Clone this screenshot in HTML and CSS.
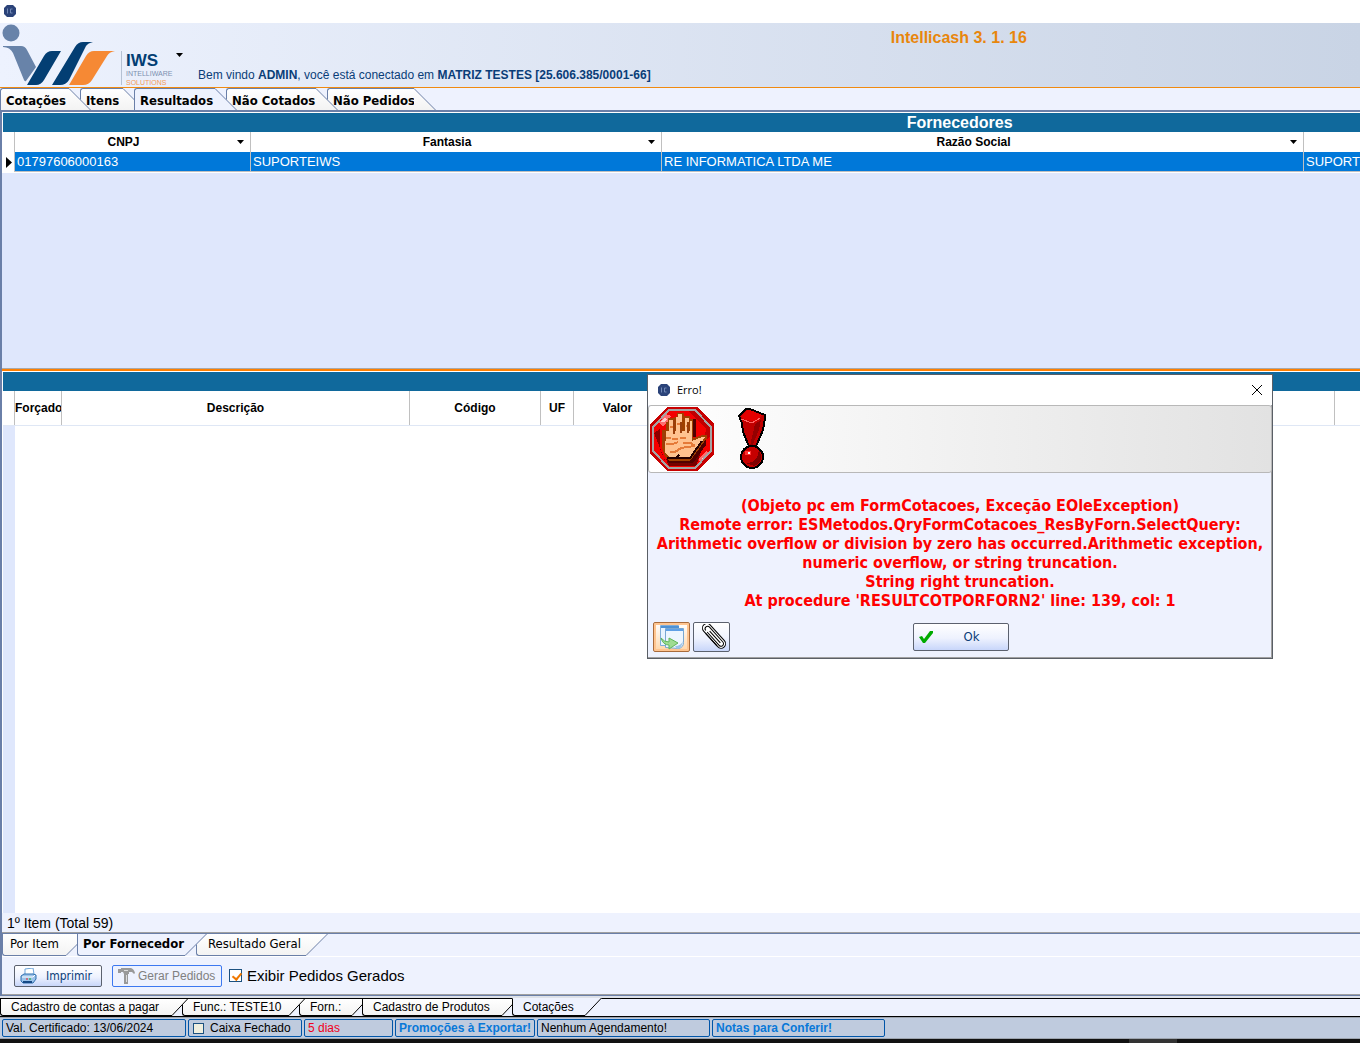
FILE: index.html
```html
<!DOCTYPE html>
<html lang="pt-BR">
<head>
<meta charset="utf-8">
<title>Intellicash</title>
<link rel="stylesheet" href="styles.css">
</head>
<body>
<svg width="0" height="0" class="defs" aria-hidden="true">
  <defs>
    <linearGradient id="tabFill" x1="0" y1="0" x2="0" y2="1"><stop offset="0" stop-color="#fff"/><stop offset="1" stop-color="#f3f3f3"/></linearGradient>
    <symbol id="appIcon" viewBox="0 0 12 12"><path d="M3 0h6l3 3v6l-3 3H3L0 9V3z" fill="#2b4379"/><path d="M3.500 3.500v5M8.500 4h-2v4h2" fill="none" stroke="#7188b5"/></symbol>
    <symbol id="slantDown" viewBox="0 0 22 22"><path d="M0 0l22 22H0z" fill="url(#tabFill)"/><path d="M0 .5L21.500 22" fill="none" stroke="#6a7fa8"/></symbol>
    <symbol id="slantDownActive" viewBox="0 0 22 22"><path d="M0 0l22 22H0z" fill="#eef2fe"/><path d="M0 .5L21.500 22" fill="none" stroke="#6a7fa8"/></symbol>
    <symbol id="slantUp" viewBox="0 0 22 22"><path d="M22 0L0 22V0z" fill="url(#tabFill)"/><path d="M0 21.500L21.500 0" fill="none" stroke="#6a7fa8"/></symbol>
    <symbol id="slantUpActive" viewBox="0 0 22 22"><path d="M22 0L0 22V0z" fill="#eef2fe"/><path d="M0 21.500L21.500 0" fill="none" stroke="#6a7fa8"/></symbol>
    <symbol id="appSlant" viewBox="0 0 17 18"><path d="M17 0L0 18V0z" fill="url(#tabFill)"/><path d="M0 17.500L16.500 0M0 .5h17" fill="none" stroke="#000"/></symbol>
    <symbol id="appSlantActive" viewBox="0 0 17 18"><path d="M17 0L0 18V0z" fill="#eef2fe"/><path d="M0 17.500L16.500 0" fill="none" stroke="#000"/></symbol>
    <symbol id="arrow" viewBox="0 0 7 4"><path d="M0 0h7L3.500 4z"/></symbol>
  </defs>
</svg>

<div class="titlebar"><svg class="icon12"><use href="#appIcon"/></svg></div>

<header class="banner">
  <svg class="logo" viewBox="0 0 170 64" role="img" aria-label="IWS Intelliware Solutions">
    <circle cx="11" cy="10" r="8.500" fill="#6883a9"/>
    <path d="M3 23h18q4 0 6 4l9 17-10 14q-1 1-2-1L13 30q-3-6-10-6z" fill="#6883a9"/>
    <path d="M61 28L44 57q-3 5-8 5h-9l17-29q3-5 8-5zM93 19q-5 1-7 4L69 57q-3 5-9 5h-8l23-38q3-5 8-5h10z" fill="#033e73"/>
    <path d="M115 28q-6 1-8 5L92 57q-3 5-9 5H69l17-29q3-5 8-5z" fill="#f68934"/>
    <path d="M121.500 28v34" stroke="#b5c1d3"/>
    <text x="126" y="43" class="logo-name">IWS</text>
    <text x="126" y="53" class="logo-sub">INTELLIWARE</text>
    <text x="126" y="62" class="logo-sub logo-orange">SOLUTIONS</text>
  </svg>
  <button class="logo-menu" aria-label="Menu"><svg class="arrow"><use href="#arrow"/></svg></button>
  <p class="welcome">Bem vindo <b>ADMIN</b>, você está conectado em <b>MATRIZ TESTES [25.606.385/0001-66]</b></p>
  <p class="product">Intellicash 3. 1. 16</p>
</header>

<nav class="tabs top-tabs">
  <div class="tab"><button class="w69">Cotações</button><svg><use href="#slantDown"/></svg></div>
  <div class="tab"><button class="w43">Itens</button><svg><use href="#slantDown"/></svg></div>
  <div class="tab active"><button class="w81">Resultados</button><svg><use href="#slantDownActive"/></svg></div>
  <div class="tab"><button class="w90">Não Cotados</button><svg><use href="#slantDown"/></svg></div>
  <div class="tab"><button class="w87">Não Pedidos</button><svg><use href="#slantDown"/></svg></div>
</nav>

<main class="workspace">
  <section class="suppliers">
    <h2 class="band">Fornecedores</h2>
    <table class="grid suppliers-grid">
      <colgroup><col class="c-mark"><col class="c-cnpj"><col class="c-fant"><col class="c-razao"><col></colgroup>
      <thead><tr>
        <th></th>
        <th><span class="head">CNPJ<svg class="arrow"><use href="#arrow"/></svg></span></th>
        <th><span class="head">Fantasia<svg class="arrow"><use href="#arrow"/></svg></span></th>
        <th><span class="head">Razão Social<svg class="arrow"><use href="#arrow"/></svg></span></th>
        <th></th>
      </tr></thead>
      <tbody><tr>
        <td class="marker"><svg viewBox="0 0 6 11"><path d="M0 0l6 5.500L0 11z"/></svg></td>
        <td>01797606000163</td><td>SUPORTEIWS</td><td>RE INFORMATICA LTDA ME</td><td>SUPORTEIWS</td>
      </tr></tbody>
    </table>
  </section>

  <section class="items">
    <div class="band"></div>
    <table class="grid items-grid">
      <colgroup><col class="c-mark"><col class="c-forc"><col class="c-desc"><col class="c-cod"><col class="c-uf"><col class="c-valor"><col><col class="c-end"></colgroup>
      <thead><tr><th></th><th>Forçado</th><th>Descrição</th><th>Código</th><th>UF</th><th>Valor</th><th></th><th></th></tr></thead>
    </table>
    <div class="items-body"></div>
  </section>

  <p class="count">1º Item (Total 59)</p>

  <nav class="tabs view-tabs">
    <div class="tab"><button class="w64">Por Item</button><svg><use href="#slantUp"/></svg></div>
    <div class="tab active"><button class="w108">Por Fornecedor</button><svg><use href="#slantUpActive"/></svg></div>
    <div class="tab"><button class="w110">Resultado Geral</button><svg><use href="#slantUp"/></svg></div>
  </nav>

  <div class="toolbar">
    <button class="btn print">
      <svg viewBox="0 0 17 16"><path d="M5 1l8-1 1 6-9 2z" fill="#fff" stroke="#6ba3d8"/><path d="M1 8l3-2h9l3 1v4l-3 4H3l-2-2z" fill="#9cc3ea" stroke="#2f6fae"/><path d="M2 9h11l2-2" fill="none" stroke="#fff"/><path d="M3 14h9" stroke="#174a86" stroke-width="2"/><path d="M6 11h2" stroke="#e22"/><path d="M9 11h2" stroke="#1a2"/></svg>
      Imprimir
    </button>
    <button class="btn orders" disabled>
      <svg viewBox="0 0 17 17"><path d="M0 2h3V1h10q3 1 4 5l-1 1-2-2h-3v2h-1v10H6V7L5 5H3v1H0z" fill="#999"/><path d="M6 3.500h4M8.500 8v7" stroke="#ddd"/></svg>
      Gerar Pedidos
    </button>
    <label class="check"><input type="checkbox" checked>Exibir Pedidos Gerados</label>
  </div>
</main>

<nav class="tabs app-tabs">
  <div class="tab"><button class="w172">Cadastro de contas a pagar</button><svg><use href="#appSlant"/></svg></div>
  <div class="tab"><button class="w107">Func.: TESTE10</button><svg><use href="#appSlant"/></svg></div>
  <div class="tab"><button class="w53">Forn.:</button><svg><use href="#appSlant"/></svg></div>
  <div class="tab"><button class="w140">Cadastro de Produtos</button><svg><use href="#appSlant"/></svg></div>
  <div class="tab active"><button class="w73">Cotações</button><svg><use href="#appSlantActive"/></svg></div>
</nav>

<footer class="status">
  <span class="cell s184">Val. Certificado: 13/06/2024</span>
  <label class="cell s114"><input type="checkbox">Caixa Fechado</label>
  <span class="cell s89 red">5 dias</span>
  <b class="cell s140 blue">Promoções à Exportar!</b>
  <span class="cell s173">Nenhum Agendamento!</span>
  <b class="cell s173 blue">Notas para Conferir!</b>
</footer>
<div class="taskbar"><span></span></div>

<div class="dialog" role="alertdialog" aria-labelledby="dlg-title">
  <div class="dialog-title">
    <svg class="icon12"><use href="#appIcon"/></svg><span id="dlg-title">Erro!</span>
    <button aria-label="Fechar"><svg viewBox="0 0 10 10"><path d="M0 0l10 10M10 0L0 10" stroke="#000" fill="none"/></svg></button>
  </div>
  <div class="dialog-banner">
    <svg width="64" height="64" viewBox="0 0 64 64" shape-rendering="crispEdges">
      <path d="M17 0h30l17 17v30L47 64H17L0 47V17z" fill="#c80000"/>
      <path d="M19 4h26l15 16v24L45 60H19L4 44V20z" fill="#f40000"/>
      <path d="M38 4h7l15 16v10l-6 4 2-12z" fill="#c00000"/>
      <path d="M4 26l6-4v20l6 14z" fill="#8c0000"/>
      <path d="M16 52h29l6-7-5 14H19z" fill="#760000"/>
      <path d="M9 16L16 7l5 2-3 6-5 4zM49 51l8-7 2 3-9 10z" fill="#ff6e6e"/>
      <path d="M11 15l3-4 3 1-2 3zM52 51l3-3 1 2-3 3z" fill="#ffd0d0"/>
      <path d="M19 3h26l16 17v24L45 61H19L3 44V20z" fill="none" stroke="#a5a5a5" stroke-width="2"/>
      <path d="M43 12h3v18h-3zM17 52h24l15-20v6L43 56H19z" fill="#500000"/>
      <path d="M12 23h4v-8h2v-4h6v-1h3V6h7v3h6v3h3v19l6-2 4-1h4v3L46 46l-6 8H19l-4-5-3-8z" fill="#a04000"/>
      <path d="M16 24h3v-11h4v11h3V10h2V7h4v17h3V11h4v13h1V14h2v20l10-4h3l-6 9-9 12H20l-5-6z" fill="#ffc28f"/>
      <path d="M16 31h5M22 32h6M30 31h6M20 20h3M27 17h4M36 19h3M16 37h7l5-2M33 36h8l4 3M20 45h5l6-4 13-2" fill="none" stroke="#e57a38" stroke-width="2"/>
      <path d="M24 13v14M31 15v11M38 15v11M14 26v13" fill="none" stroke="#9a3e0c" stroke-width="2"/>
      <path d="M17 51h23l12-17M26 51l3-3" fill="none" stroke="#250000" stroke-width="2"/>
    </svg>
    <svg width="30" height="64" viewBox="0 0 30 64" shape-rendering="crispEdges">
      <path d="M2 9l7-7h4l15 6v3l-2 12-6 14-2 4h-5l-2-4-5-12-1-9z" fill="#c00000" stroke="#000" stroke-width="2"/>
      <path d="M4 9l6-6h3l12 5-6 7-13-3z" fill="#e40000"/><path d="M4 12l11 4 8-5" fill="none" stroke="#ff6262"/>
      <path d="M18 17l6-4-2 10-7 16h-2z" fill="#940000"/>
      <circle cx="15" cy="50" r="11" fill="#c60000" stroke="#000" stroke-width="2"/><path d="M22 43q6 12-5 16l-9-3q12 1 14-13" fill="#800000"/><path d="M8 44h6v4H8z" fill="#f33"/><path d="M11 45h2v2h-2z" fill="#fff"/>
    </svg>
  </div>
  <p class="message">(Objeto pc em FormCotacoes, Exceção EOleException)<br>Remote error: ESMetodos.QryFormCotacoes_ResByForn.SelectQuery:<br>Arithmetic overflow or division by zero has occurred.Arithmetic exception,<br>numeric overflow, or string truncation.<br>String right truncation.<br>At procedure 'RESULTCOTPORFORN2' line: 139, col: 1</p>
  <div class="dialog-actions">
    <button class="btn tool hot" aria-label="Enviar"><svg viewBox="0 0 26 26"><path d="M1.500 1.500h18v20h-18z" fill="#e9f4ff" stroke="#80add8"/><path d="M2 3h18" stroke="#4e91d4" stroke-width="2"/><path d="M6.500 4.500h18v14q0 5-5 6l-13-1z" fill="#edf6ff" stroke="#79a7d2"/><path d="M7 6h17" stroke="#5fa0e6" stroke-width="2"/><path d="M24 17q-1 7-6 8l-2-3q6 0 8-5" fill="#9cc3e8"/><path d="M2 14q3 4 8 4v-4l9 5-9 6v-4q-6 0-8-7z" fill="#9fdc92" stroke="#5fb65a"/></svg></button>
    <button class="btn tool clip" aria-label="Anexo"><svg viewBox="0 0 26 26"><g transform="rotate(-42 13 13)" fill="none" stroke="#000"><path d="M8.500 21V1a4.500 4.500 0 0 1 9 0v21a4.500 4.500 0 0 1-9 0z" fill="#fff"/><path d="M10.500 4v18a2.500 2.500 0 0 0 5 0V2a2.500 2.500 0 0 0-5 0M13 5v16M8.500 4v17"/></g></svg></button>
    <button class="btn ok"><svg viewBox="0 0 14 12"><path d="M0 6l3-1 2 3 6-8h3v2L6 12H4z" fill="#0a0"/></svg><span>Ok</span></button>
  </div>
</div>
</body>
</html>
```
FILE: styles.css
```css
* { box-sizing: border-box; }
body {
  margin: 0;
  min-height: 100vh;
  display: flex;
  flex-direction: column;
  position: relative;
  overflow: hidden;
  background: #eef2fe;
  color: #000;
  font: 12px/16px "Liberation Sans", Arial, sans-serif;
}
p, h2 { margin: 0; }
button { font: inherit; color: inherit; padding: 0; border: 0; background: none; }
svg { display: block; flex: none; }
.defs { position: absolute; }
.icon12 { width: 12px; height: 12px; }
.arrow { width: 7px; height: 4px; }

.titlebar { height: 23px; padding: 5px 4px; background: #fff; }

.banner {
  display: flex;
  height: 65px;
  border-bottom: 1px solid #f08a10;
  background: linear-gradient(90deg, #edf2fe, #c9d4e5);
  position: relative;
}
.logo { width: 170px; height: 64px; overflow: visible; }
.logo-name { font: bold 17px "Liberation Sans", Arial, sans-serif; fill: #033e73; }
.logo-sub { font: 7px "Liberation Sans", Arial, sans-serif; fill: #7c90b0; }
.logo-orange { fill: #f39a58; }
.logo-menu { align-self: flex-start; padding: 30px 6px; }
.welcome { align-self: flex-end; padding: 0 0 4px 9px; color: #0a3d78; white-space: nowrap; }
.product {
  position: absolute;
  top: 7px;
  left: 41%;
  right: 0;
  text-align: center;
  font-weight: bold;
  font-size: 16px;
  color: #e8860c;
}

.tabs { display: flex; white-space: nowrap; }
.tab { display: flex; position: relative; }
.tab button { text-align: left; background: linear-gradient(#fff, #f3f3f3); }
.tab.active button { background: #eef2fe; }
.tab svg { width: 22px; height: 22px; margin-right: -11px; }
.tab:nth-child(1) { z-index: 4; }
.tab:nth-child(2) { z-index: 3; }
.tab:nth-child(4) { z-index: 2; }
.tab:nth-child(5) { z-index: 1; }
.tab.active { z-index: 5; }

.top-tabs { height: 24px; border-bottom: 2px solid #6a7fa8; font: bold 13px/16px "DejaVu Sans Condensed", "DejaVu Sans", sans-serif; }
.top-tabs button { height: 22px; padding: 2px 0 0 5px; border: solid #6a7fa8; border-width: 1px 0 0 1px; border-top-left-radius: 3px; }
.w43 { width: 43px; }
.w53 { width: 53px; }
.w64 { width: 64px; }
.w69 { width: 69px; }
.w73 { width: 73px; }
.w81 { width: 81px; }
.w87 { width: 87px; }
.w90 { width: 90px; }
.w107 { width: 107px; }
.w108 { width: 108px; }
.w110 { width: 110px; }
.w140 { width: 140px; }
.w172 { width: 172px; }

.workspace {
  flex: 1;
  display: flex;
  flex-direction: column;
  border-left: 2px solid #6a7fa8;
  border-bottom: 1px solid #6a7fa8;
}
.band {
  height: 19px;
  padding-left: 41%;
  background: #10699c;
  color: #fff;
  font-size: 16px;
  line-height: 19px;
  text-align: center;
}
.suppliers { height: 259px; padding: 1px 0 0 1px; background: linear-gradient(#fff 0 61px, #dfe7fc 61px); border-bottom: 2px solid #ff7f00; box-shadow: inset 0 -1px #a9a9a9; }
.grid { width: 100%; table-layout: fixed; border-spacing: 0; white-space: nowrap; }
.grid th, .grid td { padding: 0; border-right: 1px solid #c0c0c0; overflow: hidden; }
.grid th { background: #fff; }
.grid th:last-child, .grid td:last-child { border-right: 0; }
.c-mark { width: 12px; }
.c-cnpj { width: 236px; }
.c-fant { width: 411px; }
.c-razao { width: 642px; }
.c-forc { width: 47px; }
.c-desc { width: 348px; }
.c-cod { width: 131px; }
.c-uf { width: 33px; }
.c-valor { width: 88px; }
.c-end { width: 25px; }
.suppliers-grid th { height: 20px; }
.suppliers-grid td { height: 20px; padding-left: 2px; background: #0078d9; color: #fff; font-size: 13px; line-height: 19px; border-bottom: 1px solid #c0c0c0; }
.suppliers-grid .marker { background: #fff; padding-left: 3px; border-bottom: 0; }
.marker svg { width: 6px; height: 11px; }
.head { display: flex; align-items: center; justify-content: center; position: relative; padding-right: 18px; }
.head .arrow { position: absolute; right: 6px; }

.items { flex: 1; display: flex; flex-direction: column; padding: 1px 0 0 1px; background: #fff; }
.items-grid th { height: 34px; }
.items-body { flex: 1; border-top: 1px solid #dfe7f5; background: linear-gradient(90deg, #dfe7fc 12px, #fff 12px); }

.count { height: 20px; padding-left: 5px; border-bottom: 1px solid #a0a0a0; font-size: 14px; line-height: 20px; }

.view-tabs { height: 24px; border-top: 1px solid #6a7fa8; border-bottom: 1px solid #fff; font: 13px/16px "DejaVu Sans Condensed", "DejaVu Sans", sans-serif; }
.view-tabs button { height: 22px; padding: 0 0 1px 7px; border: solid #6a7fa8; border-width: 0 0 1px 1px; border-bottom-left-radius: 3px; }
.view-tabs .active button { padding-left: 5px; font-weight: bold; }
.view-tabs .tab:nth-child(3) button { padding-left: 11px; }

.toolbar { display: flex; align-items: center; height: 38px; padding-left: 12px; border-bottom: 1px solid #a0a0a0; }
.btn { display: flex; align-items: center; border: 1px solid #5b616e; border-radius: 2px; background: linear-gradient(#fff, #eef2fe 55%, #c8d6fa); color: #0a3d78; }
.print { width: 88px; height: 22px; padding-left: 5px; gap: 9px; font: 12px/16px "DejaVu Sans Condensed", "DejaVu Sans", sans-serif; }
.print svg { width: 17px; height: 16px; }
.orders { width: 110px; height: 22px; margin-left: 10px; padding-left: 5px; gap: 3px; border-color: #3c78f0; background: #eef2fe; color: #808080; }
.orders svg { width: 17px; height: 17px; }
.check { display: flex; align-items: center; margin-left: 7px; gap: 5px; font-size: 15px; }
.check input, .status input { appearance: none; width: 13px; height: 13px; margin: 0; border: 1px solid #1c5180; background: #fff; }
.check input { position: relative; }
.check input:checked::after { content: ""; position: absolute; left: 4px; top: 1px; width: 4px; height: 7px; border: solid #f07800; border-width: 0 2px 2px 0; transform: rotate(40deg); }

.app-tabs { height: 21px; padding-top: 2px; background: linear-gradient(#dde1e8 0 2px, #000 2px 3px, #eef2fe 3px); border-bottom: 1px solid #000; }
.app-tabs button { height: 18px; padding: 0 0 0 10px; border: 1px solid #000; border-right: 0; border-bottom-left-radius: 3px; }
.app-tabs .active button { border-top-color: #eef2fe; }
.app-tabs svg { width: 17px; height: 18px; margin-right: -7px; }

.status { display: flex; gap: 2px; height: 22px; padding: 1px 2px; border: solid #9da4ae; border-width: 1px 0; background: #bfcbde; white-space: nowrap; }
.cell { display: flex; align-items: center; height: 18px; padding-left: 3px; border: 1px solid #0055a8; border-radius: 2px; }
.status input { width: 11px; height: 11px; margin: 0 6px 0 1px; background: #f0efdf; }
.s184 { width: 184px; }
.s114 { width: 114px; }
.s89 { width: 89px; }
.s140 { width: 140px; }
.s173 { width: 173px; }
.red { color: #f00020; }
.blue { color: #0878d8; }
.taskbar { height: 4px; background: #111; padding-left: 83%; }
.taskbar span { display: block; width: 48px; height: 4px; background: #333; }

.dialog {
  position: absolute;
  z-index: 10;
  top: 374px;
  right: 87px;
  width: 626px;
  border: 1px solid #5a5f66;
  box-shadow: inset -1px -1px #a0a0a0;
  background: #eef2fe;
}
.dialog-title { display: flex; align-items: center; height: 30px; padding: 0 10px; gap: 7px; background: #fff; font: 11px/16px "Open Sans", sans-serif; }
.dialog-title button { margin-left: auto; }
.dialog-title button svg { width: 10px; height: 10px; }
.dialog-banner { display: flex; gap: 23px; height: 68px; padding: 1px; border: 1px solid #b8b8b8; border-radius: 3px; background: linear-gradient(90deg, #fff, #e2e2e2); }
.message { padding: 23px 0 0; color: #f00; text-align: center; white-space: nowrap; font: bold 16px/19px "DejaVu Sans Condensed", "DejaVu Sans", sans-serif; }
.dialog-actions { display: flex; gap: 3px; padding: 12px 5px 6px; }
.tool { width: 37px; height: 30px; justify-content: center; }
.tool svg { width: 26px; height: 26px; }
.clip { padding-left: 6px; }
.hot { border-color: #a86b3c; background: linear-gradient(#fff, #ffd6a8); box-shadow: inset 0 0 0 2px #ffc590; }
.ok { width: 96px; height: 28px; margin: 1px 0 0 180px; padding-left: 5px; font: 13px/16px "DejaVu Sans Condensed", "DejaVu Sans", sans-serif; }
.ok svg { width: 14px; height: 12px; }
.ok span { flex: 1; padding-left: 2px; text-align: center; }
```
